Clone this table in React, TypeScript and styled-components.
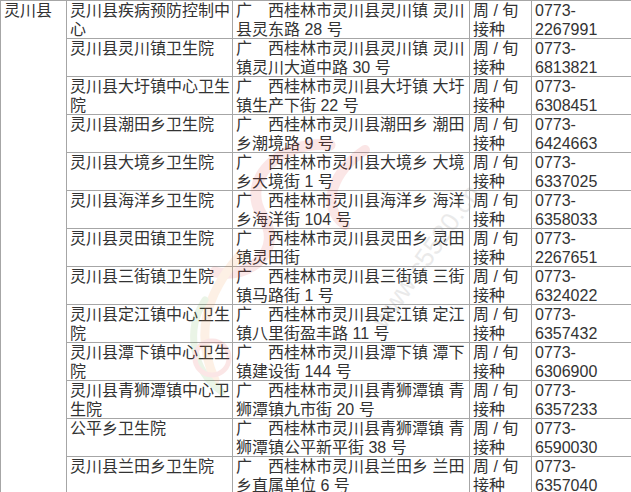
import React from 'react'
import styled, { createGlobalStyle } from 'styled-components'

const GlobalStyle = createGlobalStyle`
  html, body {
    margin: 0;
    padding: 0;
    background: #ffffff;
    overflow: hidden;
  }
`

const Page = styled.div`
  position: relative;
  width: 631px;
  height: 492px;
  overflow: hidden;
  background: #ffffff;
`

const Grid = styled.div`
  display: grid;
  grid-template-columns: 65px 165px 236px 61px 1fr;
  grid-auto-rows: 37px;
  gap: 1px;
  padding: 1px 0 0 1px;
  background: #a6a6a6;
  width: 631px;
  box-sizing: border-box;
  font-family: "Liberation Sans", "Noto Sans CJK SC", sans-serif;
  font-size: 16px;
  line-height: 19px;
  color: #333333;
`

const Cell = styled.div<{ $span?: number }>`
  background: #ffffff;
  padding: 0 2px 0 3px;
  white-space: nowrap;
  overflow: hidden;
  ${(p) => (p.$span ? `grid-row: 1 / span ${p.$span};` : '')}
`

const Line = styled.div`
  height: 19px;
`

const Watermark = styled.svg`
  position: absolute;
  left: 0;
  top: 0;
  pointer-events: none;
`

type Row = {
  name: string[]
  addr: string[]
  phone: string
}

const rows: Row[] = [
  { name: ['灵川县疾病预防控制中', '心'], addr: ['广　西桂林市灵川县灵川镇 灵川', '县灵东路 28 号'], phone: '2267991' },
  { name: ['灵川县灵川镇卫生院'], addr: ['广　西桂林市灵川县灵川镇 灵川', '镇灵川大道中路 30 号'], phone: '6813821' },
  { name: ['灵川县大圩镇中心卫生', '院'], addr: ['广　西桂林市灵川县大圩镇 大圩', '镇生产下街 22 号'], phone: '6308451' },
  { name: ['灵川县潮田乡卫生院'], addr: ['广　西桂林市灵川县潮田乡 潮田', '乡潮境路 9 号'], phone: '6424663' },
  { name: ['灵川县大境乡卫生院'], addr: ['广　西桂林市灵川县大境乡 大境', '乡大境街 1 号'], phone: '6337025' },
  { name: ['灵川县海洋乡卫生院'], addr: ['广　西桂林市灵川县海洋乡 海洋', '乡海洋街 104 号'], phone: '6358033' },
  { name: ['灵川县灵田镇卫生院'], addr: ['广　西桂林市灵川县灵田乡 灵田', '镇灵田街'], phone: '2267651' },
  { name: ['灵川县三街镇卫生院'], addr: ['广　西桂林市灵川县三街镇 三街', '镇马路街 1 号'], phone: '6324022' },
  { name: ['灵川县定江镇中心卫生', '院'], addr: ['广　西桂林市灵川县定江镇 定江', '镇八里街盈丰路 11 号'], phone: '6357432' },
  { name: ['灵川县潭下镇中心卫生', '院'], addr: ['广　西桂林市灵川县潭下镇 潭下', '镇建设街 144 号'], phone: '6306900' },
  { name: ['灵川县青狮潭镇中心卫', '生院'], addr: ['广　西桂林市灵川县青狮潭镇 青', '狮潭镇九市街 20 号'], phone: '6357233' },
  { name: ['公平乡卫生院'], addr: ['广　西桂林市灵川县青狮潭镇 青', '狮潭镇公平新平街 38 号'], phone: '6590030' },
  { name: ['灵川县兰田乡卫生院'], addr: ['广　西桂林市灵川县兰田乡 兰田', '乡直属单位 6 号'], phone: '6357040' },
]

const Lines = ({ items }: { items: string[] }) => (
  <>
    {items.map((t, i) => (
      <Line key={i}>{t}</Line>
    ))}
  </>
)

const App = () => {
  return (
    <Page>
      <GlobalStyle />
      <Grid>
        <Cell $span={rows.length}>灵川县</Cell>
        {rows.map((r, i) => (
          <React.Fragment key={i}>
            <Cell>
              <Lines items={r.name} />
            </Cell>
            <Cell>
              <Lines items={r.addr} />
            </Cell>
            <Cell>
              <Lines items={['周 / 旬', '接种']} />
            </Cell>
            <Cell>
              <Lines items={['0773-', r.phone]} />
            </Cell>
          </React.Fragment>
        ))}
      </Grid>
      <Watermark width="631" height="492" viewBox="0 0 631 492">
        <g opacity="0.12" fill="none" strokeLinecap="round">
          <path d="M330 145 C 280 140, 240 180, 262 215 C 285 250, 250 280, 215 272" stroke="#e23a3a" strokeWidth="11" />
          <path d="M365 150 C 335 170, 318 205, 345 225" stroke="#e23a3a" strokeWidth="10" />
          <path d="M240 255 C 205 295, 195 335, 215 380" stroke="#f08a30" strokeWidth="9" />
          <path d="M205 300 C 185 330, 192 370, 222 392" stroke="#5aa83c" strokeWidth="7" />
          <circle cx="212" cy="358" r="17" stroke="#e23a3a" strokeWidth="5" />
        </g>
        <text
          x="0"
          y="0"
          transform="translate(385 330) rotate(-55)"
          fill="#9a9a9a"
          opacity="0.2"
          fontFamily="Liberation Sans, sans-serif"
          fontSize="26"
        >
          www.c5520.cn
        </text>
      </Watermark>
    </Page>
  )
}

export default App
